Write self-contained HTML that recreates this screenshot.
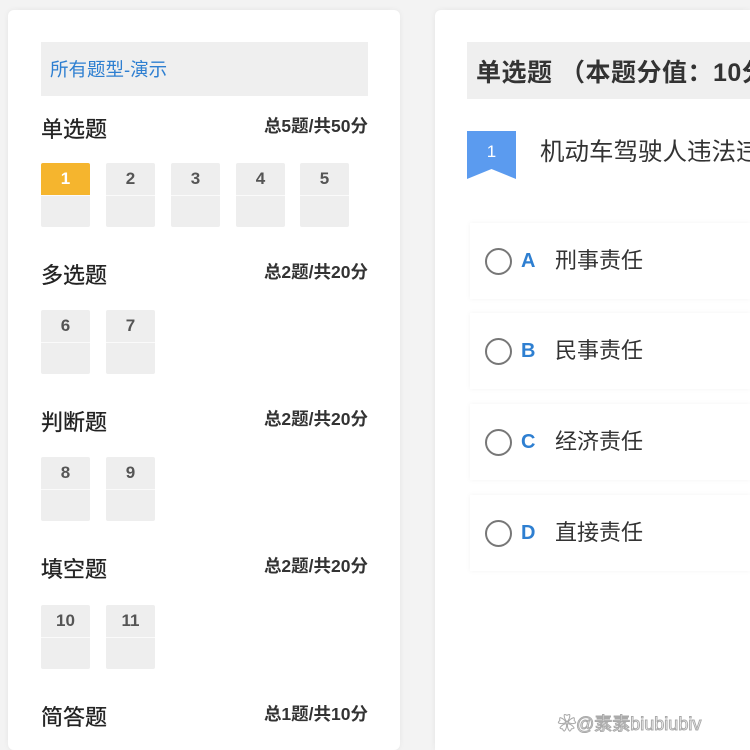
<!DOCTYPE html>
<html><head><meta charset="utf-8"><style>
*{margin:0;padding:0;box-sizing:border-box}
html,body{width:750px;height:750px;overflow:hidden}
body{background:#f3f3f3;font-family:"Liberation Sans","Noto Sans CJK SC",sans-serif;position:relative;color:#333}
.clip{position:absolute;left:0;top:0;width:750px;height:750px;overflow:hidden}
.card{position:absolute;background:#fff;border-radius:6px;box-shadow:0 0 6px rgba(0,0,0,.06)}
.a{position:absolute}
.hdr{background:#efefef}
.sec{position:absolute;left:41px;width:327px;font-size:22px;color:#222;-webkit-text-stroke:.3px #222}
.sec b{position:absolute;right:0;top:1px;font-size:17.5px;font-weight:bold;color:#333;-webkit-text-stroke:0}
.box{position:absolute;width:49px;height:64px;background:#eeeeee;border-radius:2px;font-size:17px;font-weight:bold;color:#555;text-align:center;line-height:32px}
.box:after{content:"";position:absolute;left:0;right:0;top:32px;height:1px;background:#fafafa}
.cur{background:linear-gradient(#f5b52e 0,#f5b52e 32px,#eeeeee 32px);color:#fff}
.opt{position:absolute;left:470px;width:280px;height:76px;box-shadow:0 0 5px rgba(0,0,0,.05);background:#fff}
.opt i{position:absolute;left:15px;top:25px;width:27px;height:27px;border:2px solid #777;border-radius:50%}
.opt b{position:absolute;left:51px;top:26px;font-size:20px;line-height:24px;color:#2e7fd1}
.opt span{position:absolute;left:85px;top:23px;font-size:22px;line-height:30px;color:#333}
</style></head><body><div class="clip">
<div class="card" style="left:8px;top:10px;width:392px;height:740px"></div>
<div class="card" style="left:435px;top:10px;width:315px;height:740px;border-radius:6px 0 0 0"></div>
<div class="a hdr" style="left:41px;top:42px;width:327px;height:54px"></div>
<div class="a" style="left:50px;top:56px;font-size:18.5px;color:#2e7fd1">所有题型-演示</div>

<div class="sec" style="top:112px">单选题<b>总5题/共50分</b></div>
<div class="box cur" style="left:41px;top:163px">1</div>
<div class="box" style="left:106px;top:163px">2</div>
<div class="box" style="left:171px;top:163px">3</div>
<div class="box" style="left:236px;top:163px">4</div>
<div class="box" style="left:300px;top:163px">5</div>

<div class="sec" style="top:258px">多选题<b>总2题/共20分</b></div>
<div class="box" style="left:41px;top:310px">6</div>
<div class="box" style="left:106px;top:310px">7</div>

<div class="sec" style="top:405px">判断题<b>总2题/共20分</b></div>
<div class="box" style="left:41px;top:457px">8</div>
<div class="box" style="left:106px;top:457px">9</div>

<div class="sec" style="top:552px">填空题<b>总2题/共20分</b></div>
<div class="box" style="left:41px;top:605px">10</div>
<div class="box" style="left:106px;top:605px">11</div>

<div class="sec" style="top:700px">简答题<b>总1题/共10分</b></div>

<div class="a hdr" style="left:467px;top:42px;width:283px;height:57px;overflow:hidden"><div style="position:absolute;left:9px;top:11px;font-size:25px;font-weight:bold;color:#333;white-space:nowrap;letter-spacing:.5px">单选题 （本题分值：10分）</div></div>
<svg class="a" style="left:467px;top:131px" width="49" height="48"><path d="M0 0H49V48L24.5 38L0 48Z" fill="#5b9bef"/><text x="24.5" y="26" text-anchor="middle" font-size="17" fill="#fff" font-family="Liberation Sans">1</text></svg>
<div class="a" style="left:540px;top:133px;width:210px;overflow:hidden;font-size:24.5px;color:#333;white-space:nowrap">机动车驾驶人违法违规</div>

<div class="opt" style="top:223px"><i></i><b>A</b><span>刑事责任</span></div>
<div class="opt" style="top:313px"><i></i><b>B</b><span>民事责任</span></div>
<div class="opt" style="top:404px"><i></i><b>C</b><span>经济责任</span></div>
<div class="opt" style="top:495px"><i></i><b>D</b><span>直接责任</span></div>

<div class="a" style="left:558px;top:710px;font-size:18px;color:#fff;-webkit-text-stroke:1px #aaa;white-space:nowrap">✿@素素biubiubiv</div>
</div></body></html>
